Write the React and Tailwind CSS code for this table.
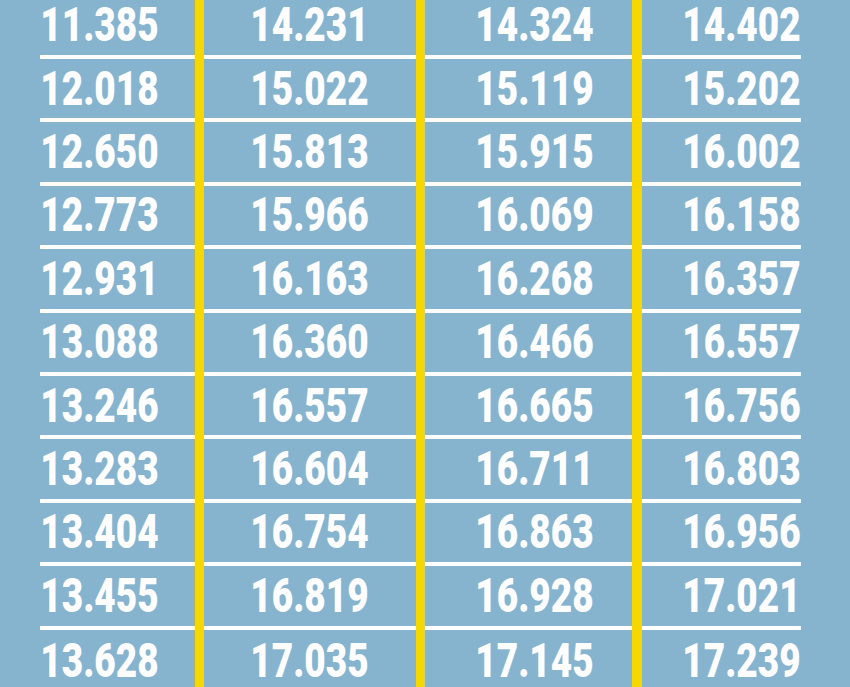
import React from 'react';

// tabla de valores, una columna por grupo
const columns = [
  {
    width: 'w-[155px]',
    pad: 'pr-[36px]',
    values: ['11.385', '12.018', '12.650', '12.773', '12.931', '13.088', '13.246', '13.283', '13.404', '13.455', '13.628'],
  },
  {
    width: 'w-[212px]',
    pad: 'pr-[47px]',
    values: ['14.231', '15.022', '15.813', '15.966', '16.163', '16.360', '16.557', '16.604', '16.754', '16.819', '17.035'],
  },
  {
    width: 'w-[207px]',
    pad: 'pr-[38px]',
    values: ['14.324', '15.119', '15.915', '16.069', '16.268', '16.466', '16.665', '16.711', '16.863', '16.928', '17.145'],
  },
  {
    width: 'w-[159px]',
    pad: 'pr-0',
    values: ['14.402', '15.202', '16.002', '16.158', '16.357', '16.557', '16.756', '16.803', '16.956', '17.021', '17.239'],
  },
];

const Column = ({ width, pad, values }) => (
  <div className={`${width} flex flex-col mt-[-4.4px]`}>
    {values.map((v, i) => (
      <div
        key={i}
        className={`h-[63.4px] shrink-0 flex items-center justify-end ${pad} ${
          i < values.length - 1 ? 'border-b-4 border-[#fdfdfd]' : ''
        }`}
      >
        <span className="inline-block origin-right scale-x-[0.77] text-[48px] leading-none font-black text-[#fdfdfd] font-['Roboto',sans-serif]">
          {v}
        </span>
      </div>
    ))}
  </div>
);

const Divider = ({ width }) => <div className={`${width} shrink-0 self-stretch bg-[#f6d800]`} />;

export default function App() {
  return (
    <div className="w-[850px] h-[687px] overflow-hidden bg-[#86b4cf] flex pl-[40px]">
      <Column {...columns[0]} />
      <Divider width="w-[9px]" />
      <Column {...columns[1]} />
      <Divider width="w-[9px]" />
      <Column {...columns[2]} />
      <Divider width="w-[10px]" />
      <Column {...columns[3]} />
    </div>
  );
}
